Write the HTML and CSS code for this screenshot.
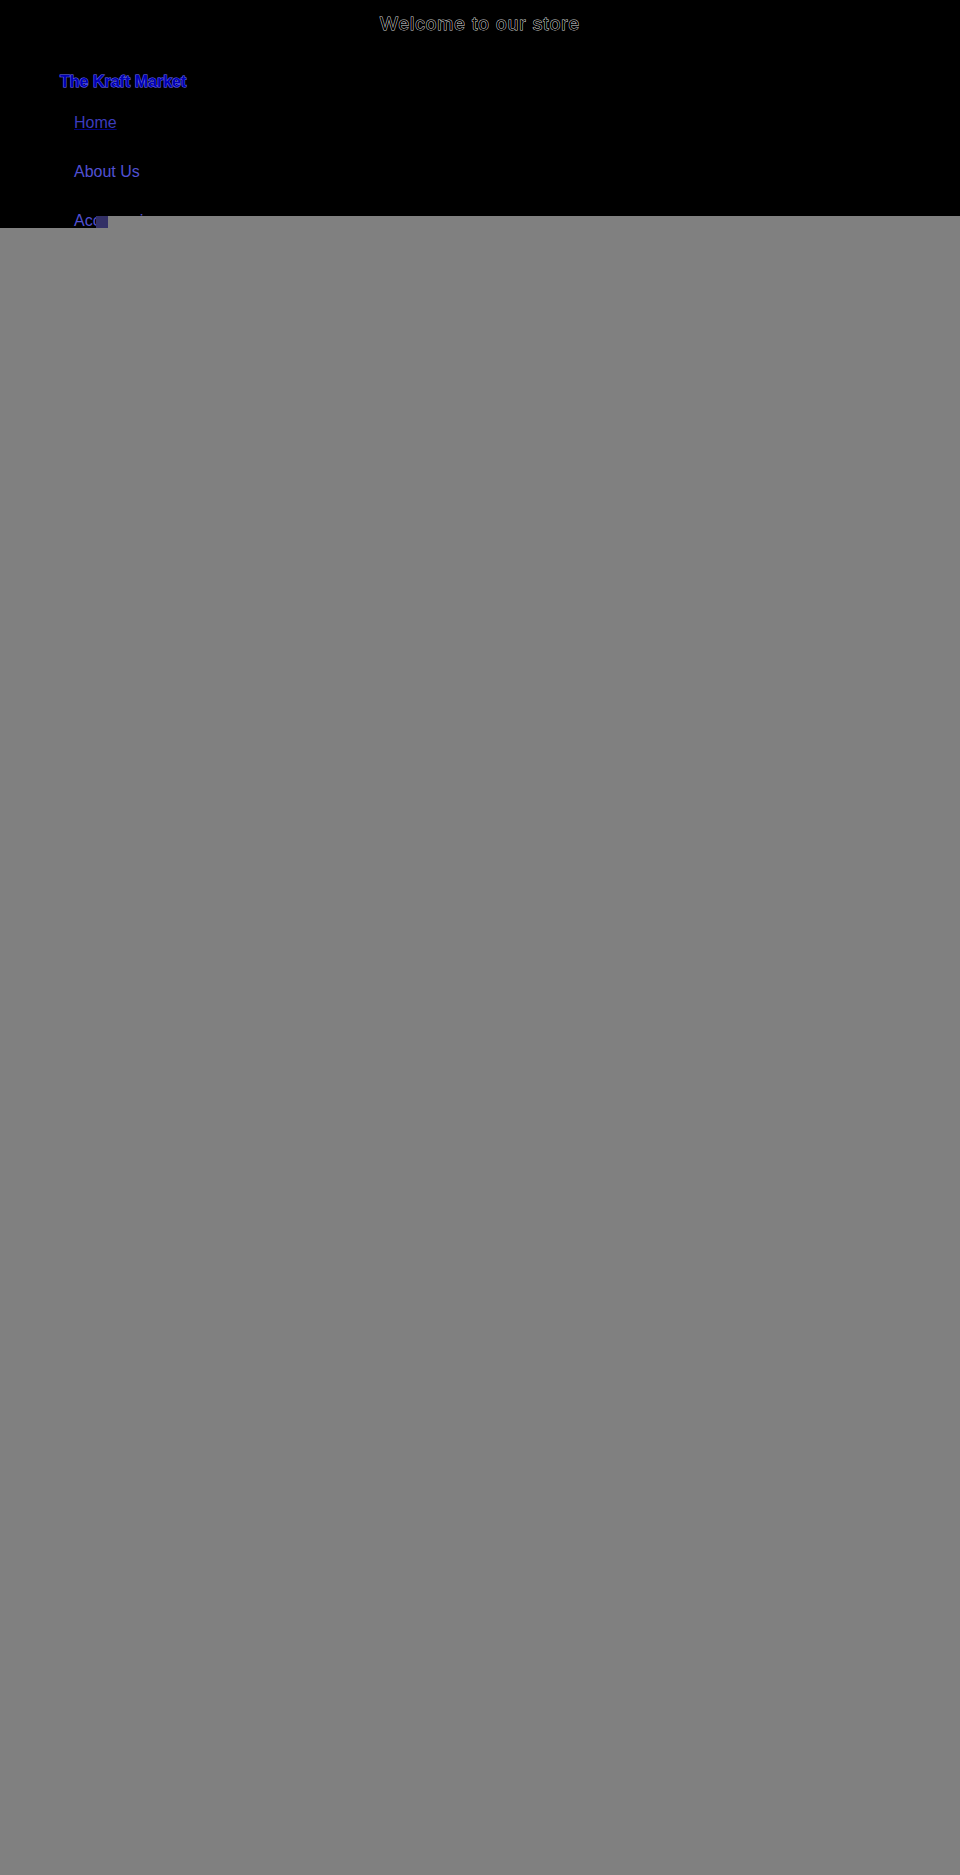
FILE: index.html
```html
<!DOCTYPE html>
<html lang="en">
<head>
    <meta charset="UTF-8">
    <meta name="viewport" content="width=device-width, initial-scale=1.0">
    <title>The Kraft Market</title>
    <link rel="stylesheet" href="styles.css">
</head>
<body>
    <p class="announcement">Welcome to our store</p>
    <header class="header">
        <a class="brand" href="#">The Kraft Market</a>
        <nav>
            <ul class="menu">
                <li><a class="active" href="#">Home</a></li>
                <li><a href="#">About Us</a></li>
                <li><a href="#">Accessories</a></li>
            </ul>
        </nav>
    </header>
    <main class="content">
        <div class="content-edge"></div>
    </main>
</body>
</html>
```

FILE: styles.css
```css
body {
    font-family: "Liberation Sans", Arial, sans-serif;
    font-size: 16px;
    background: #000;
    margin: 0;
    min-height: 100vh;
    display: flex;
    flex-direction: column;
}

.announcement {
    margin: 0;
    padding: 12px;
    font-size: 19px;
    line-height: 24px;
    letter-spacing: 1px;
    text-align: center;
    color: #000;
    -webkit-text-stroke: 1px #d2d2d2;
    paint-order: stroke fill;
}

.header {
    padding: 20px 60px 0;
}

.header a {
    color: #5050d2;
    text-decoration: none;
}

.header .brand {
    display: block;
    font-weight: bold;
    line-height: 28px;
    color: #0000b4;
    -webkit-text-stroke: 1px #6e6eff;
    paint-order: stroke fill;
}

.menu {
    list-style: none;
    margin: 2px 0 0;
    padding: 0 14px;
}

.menu a {
    display: block;
    line-height: 49px;
}

.header .active {
    color: #3c3cbe;
    text-decoration: underline;
    text-decoration-color: #000078;
}

.content {
    flex: 1;
    position: relative;
    margin-top: -17px;
    background: #808080;
}

/* upper step of the panel, lies over the last menu item */
.content-edge {
    position: absolute;
    left: 96px;
    right: 0;
    bottom: 100%;
    height: 12px;
    background: linear-gradient(to right, #333066 12px, #808080 12px);
}
```
